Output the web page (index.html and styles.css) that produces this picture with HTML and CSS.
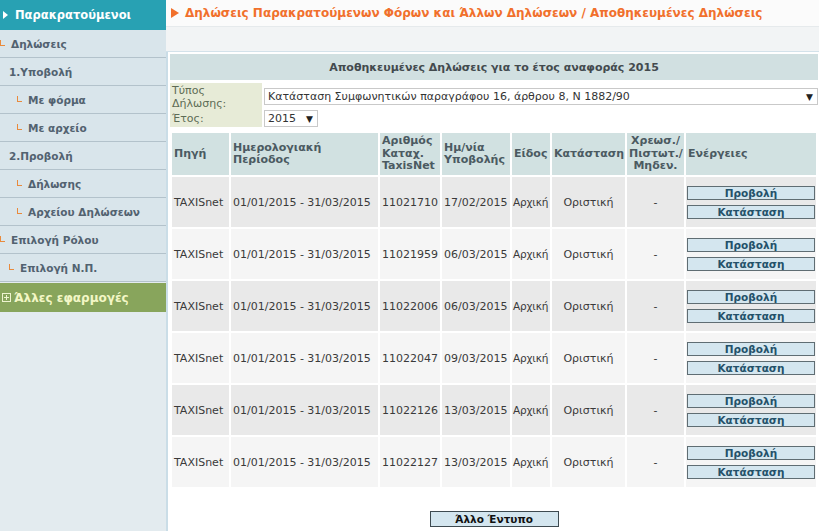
FILE: index.html
```html
<!DOCTYPE html>
<html lang="el">
<head>
<meta charset="utf-8">
<title>Αποθηκευμένες Δηλώσεις</title>
<link rel="stylesheet" href="styles.css">
</head>
<body>
<div class="page">
  <nav class="sidebar">
    <div class="side-top"><span class="wtri"></span>Παρακρατούμενοι</div>
    <ul class="menu">
      <li class="lv0"><span class="elbow"></span>Δηλώσεις</li>
      <li class="lv1">1.Υποβολή</li>
      <li class="lv2"><span class="elbow"></span>Με φόρμα</li>
      <li class="lv2"><span class="elbow"></span>Με αρχείο</li>
      <li class="lv1">2.Προβολή</li>
      <li class="lv2"><span class="elbow"></span>Δήλωσης</li>
      <li class="lv2"><span class="elbow"></span>Αρχείου Δηλώσεων</li>
      <li class="lv0"><span class="elbow"></span>Επιλογή Ρόλου</li>
      <li class="lv1e"><span class="elbow"></span>Επιλογή Ν.Π.</li>
    </ul>
    <div class="side-apps"><span class="plusbox"></span>Άλλες εφαρμογές</div>
  </nav>
  <main class="main">
    <div class="crumb"><span class="otri"></span>Δηλώσεις Παρακρατούμενων Φόρων και Άλλων Δηλώσεων / Αποθηκευμένες Δηλώσεις</div>
    <div class="band"></div>
    <div class="content">
      <div class="title">Αποθηκευμένες Δηλώσεις για το έτος αναφοράς 2015</div>
      <div class="form">
        <div class="frow">
          <div class="flabel">Τύπος<br>Δήλωσης:</div>
          <div class="fvalue"><div class="select wide"><span>Κατάσταση Συμφωνητικών παραγράφου 16, άρθρου 8, Ν 1882/90</span><span class="arrow">▼</span></div></div>
        </div>
        <div class="frow">
          <div class="flabel short">Έτος:</div>
          <div class="fvalue"><div class="select year"><span>2015</span><span class="arrow">▼</span></div></div>
        </div>
      </div>
      <table class="grid">
        <colgroup>
          <col class="c1"><col class="c2"><col class="c3"><col class="c4"><col class="c5"><col class="c6"><col class="c7"><col class="c8">
        </colgroup>
        <thead>
          <tr>
            <th>Πηγή</th>
            <th>Ημερολογιακή<br>Περίοδος</th>
            <th>Αριθμός<br>Καταχ.<br>TaxisNet</th>
            <th>Ημ/νία<br>Υποβολής</th>
            <th>Είδος</th>
            <th>Κατάσταση</th>
            <th class="ctr">Χρεωσ./<br>Πιστωτ./<br>Μηδεν.</th>
            <th>Ενέργειες</th>
          </tr>
        </thead>
        <tbody>
          <tr class="odd">
            <td>TAXISnet</td><td>01/01/2015 - 31/03/2015</td><td>11021710</td><td>17/02/2015</td><td class="kind">Αρχική</td><td class="ctr">Οριστική</td><td class="ctr">-</td>
            <td class="acts"><button class="act">Προβολή</button><button class="act">Κατάσταση</button></td>
          </tr>
          <tr class="even">
            <td>TAXISnet</td><td>01/01/2015 - 31/03/2015</td><td>11021959</td><td>06/03/2015</td><td class="kind">Αρχική</td><td class="ctr">Οριστική</td><td class="ctr">-</td>
            <td class="acts"><button class="act">Προβολή</button><button class="act">Κατάσταση</button></td>
          </tr>
          <tr class="odd">
            <td>TAXISnet</td><td>01/01/2015 - 31/03/2015</td><td>11022006</td><td>06/03/2015</td><td class="kind">Αρχική</td><td class="ctr">Οριστική</td><td class="ctr">-</td>
            <td class="acts"><button class="act">Προβολή</button><button class="act">Κατάσταση</button></td>
          </tr>
          <tr class="even">
            <td>TAXISnet</td><td>01/01/2015 - 31/03/2015</td><td>11022047</td><td>09/03/2015</td><td class="kind">Αρχική</td><td class="ctr">Οριστική</td><td class="ctr">-</td>
            <td class="acts"><button class="act">Προβολή</button><button class="act">Κατάσταση</button></td>
          </tr>
          <tr class="odd">
            <td>TAXISnet</td><td>01/01/2015 - 31/03/2015</td><td>11022126</td><td>13/03/2015</td><td class="kind">Αρχική</td><td class="ctr">Οριστική</td><td class="ctr">-</td>
            <td class="acts"><button class="act">Προβολή</button><button class="act">Κατάσταση</button></td>
          </tr>
          <tr class="even">
            <td>TAXISnet</td><td>01/01/2015 - 31/03/2015</td><td>11022127</td><td>13/03/2015</td><td class="kind">Αρχική</td><td class="ctr">Οριστική</td><td class="ctr">-</td>
            <td class="acts"><button class="act">Προβολή</button><button class="act">Κατάσταση</button></td>
          </tr>
        </tbody>
      </table>
      <div class="footer"><button class="other">Άλλο Έντυπο</button></div>
    </div>
  </main>
</div>
</body>
</html>
```
FILE: styles.css
```css
* { box-sizing: border-box; }
html, body { margin: 0; padding: 0; }
body {
  font-family: "DejaVu Sans", Verdana, sans-serif;
  font-size: 11px;
  color: #333;
  background: #fff;
  width: 819px;
  height: 531px;
  overflow: hidden;
}
.page { display: flex; height: 531px; }

/* sidebar */
.sidebar {
  width: 166px;
  flex: none;
  background: #e3ebef;
  display: flex;
  flex-direction: column;
}
.side-top {
  height: 30px;
  background: #28a1b3;
  color: #fff;
  font-weight: bold;
  font-size: 11.5px;
  display: flex;
  align-items: center;
  padding-left: 3px;
}
.wtri {
  width: 0; height: 0;
  border-left: 5px solid #fff;
  border-top: 4px solid transparent;
  border-bottom: 4px solid transparent;
  margin-right: 7px;
}
.menu { list-style: none; margin: 0; padding: 0; }
.menu li {
  height: 28px;
  display: flex;
  align-items: center;
  background: #d9e5eb;
  border-bottom: 1px solid #b3c2cb;
  color: #526270;
  font-weight: bold;
  font-size: 10.5px;
}
.lv0 { padding-left: 0; }
.lv1 { padding-left: 9px; }
.lv1e { padding-left: 9px; }
.lv2 { padding-left: 17px; }
.elbow {
  display: inline-block;
  width: 5px;
  height: 6px;
  border-left: 1px solid #e98a3c;
  border-bottom: 1px solid #e98a3c;
  margin-right: 6px;
  margin-top: -2px;
}
.side-apps {
  height: 30px;
  background: #88a55c;
  color: #f3f7c6;
  font-weight: bold;
  font-size: 12px;
  display: flex;
  align-items: center;
  padding-left: 2px;
  border-top: 1px solid #e3ebef;
}
.plusbox {
  position: relative;
  width: 9px; height: 9px;
  border: 1px solid #eef3d0;
  margin-right: 3px;
}
.plusbox::before, .plusbox::after {
  content: "";
  position: absolute;
  background: #eef3d0;
}
.plusbox::before { left: 1px; right: 1px; top: 3px; height: 1px; }
.plusbox::after { top: 1px; bottom: 1px; left: 3px; width: 1px; }

/* main */
.main { flex: 1; display: flex; flex-direction: column; min-width: 0; }
.crumb {
  height: 27px;
  background: #fbfbfb;
  color: #f1702c;
  font-weight: bold;
  font-size: 12px;
  display: flex;
  align-items: center;
  padding-left: 5px;
  white-space: nowrap;
  border-bottom: 1px solid #e6eaec;
}
.otri {
  width: 0; height: 0;
  border-left: 8px solid #f1702c;
  border-top: 5px solid transparent;
  border-bottom: 5px solid transparent;
  margin-right: 6px;
}
.band {
  height: 25px;
  background: #f2f4f5;
  border-bottom: 1px solid #d3e2ea;
}
.content {
  flex: 1;
  background: #fff;
  border-left: 2px solid #cadde7;
  padding: 2px 1px 0 2px;
}
.title {
  height: 26px;
  background: #d1e0e1;
  color: #434a4e;
  font-weight: bold;
  font-size: 11px;
  display: flex;
  align-items: center;
  justify-content: center;
}
.form { margin-top: 3px; }
.frow { display: flex; }
.flabel {
  width: 92px;
  background: #e7ebd7;
  color: #5d6b55;
  font-size: 11px;
  line-height: 13px;
  padding: 1px 2px;
  height: 27px;
}
.flabel.short { height: 17px; padding-top: 2px; }
.fvalue { flex: 1; padding-left: 2px; display: flex; align-items: center; }
.select {
  height: 17px;
  border: 1px solid #c9c9c9;
  background: #fff;
  display: flex;
  align-items: center;
  justify-content: space-between;
  padding: 0 4px 0 3px;
  font-size: 11px;
  color: #333;
}
.select.wide { flex: 1; }
.select.year { width: 54px; }
.arrow { font-size: 9px; color: #222; }

/* grid */
.grid {
  table-layout: fixed;
  width: 648px;
  border-collapse: separate;
  border-spacing: 2px;
  margin-top: 4px;
}
.c1 { width: 57px; }
.c2 { width: 147px; }
.c3 { width: 60px; }
.c4 { width: 68px; }
.c5 { width: 38px; }
.c6 { width: 73px; }
.c7 { width: 57px; }
.c8 { width: 130px; }
.grid th {
  background: #d1e1e1;
  color: #4b5a61;
  font-weight: bold;
  font-size: 11px;
  line-height: 12.5px;
  text-align: left;
  padding: 2px 2px;
  height: 42px;
  vertical-align: middle;
  white-space: nowrap;
}
.grid td {
  height: 50px;
  padding: 0 2px;
  font-size: 11px;
  color: #3a3a3a;
  white-space: nowrap;
  vertical-align: middle;
}
.grid td.kind { padding: 0 0 0 1px; font-size: 10.5px; letter-spacing: -0.2px; }
.grid th.ctr, .grid td.ctr { text-align: center; }
.odd td { background: #e9e9e9; }
.even td { background: #f5f5f5; }
.grid td.acts { padding: 0 1px; }
.act {
  display: block;
  width: 128px;
  height: 14px;
  margin: 0 auto;
  padding: 0;
  background: #d4e6ef;
  border: 1px solid #5f6d73;
  color: #24516a;
  font-family: "DejaVu Sans", Verdana, sans-serif;
  font-weight: bold;
  font-size: 10.5px;
  line-height: 12px;
}
.act + .act { margin-top: 5px; }
.footer { display: flex; justify-content: center; margin-top: 22px; padding-right: 0; }
.other {
  width: 129px;
  height: 16px;
  padding: 0;
  background: #d4e6ef;
  border: 1px solid #3d4a50;
  color: #111;
  font-family: "DejaVu Sans", Verdana, sans-serif;
  font-weight: bold;
  font-size: 10.5px;
  line-height: 13px;
}
```
